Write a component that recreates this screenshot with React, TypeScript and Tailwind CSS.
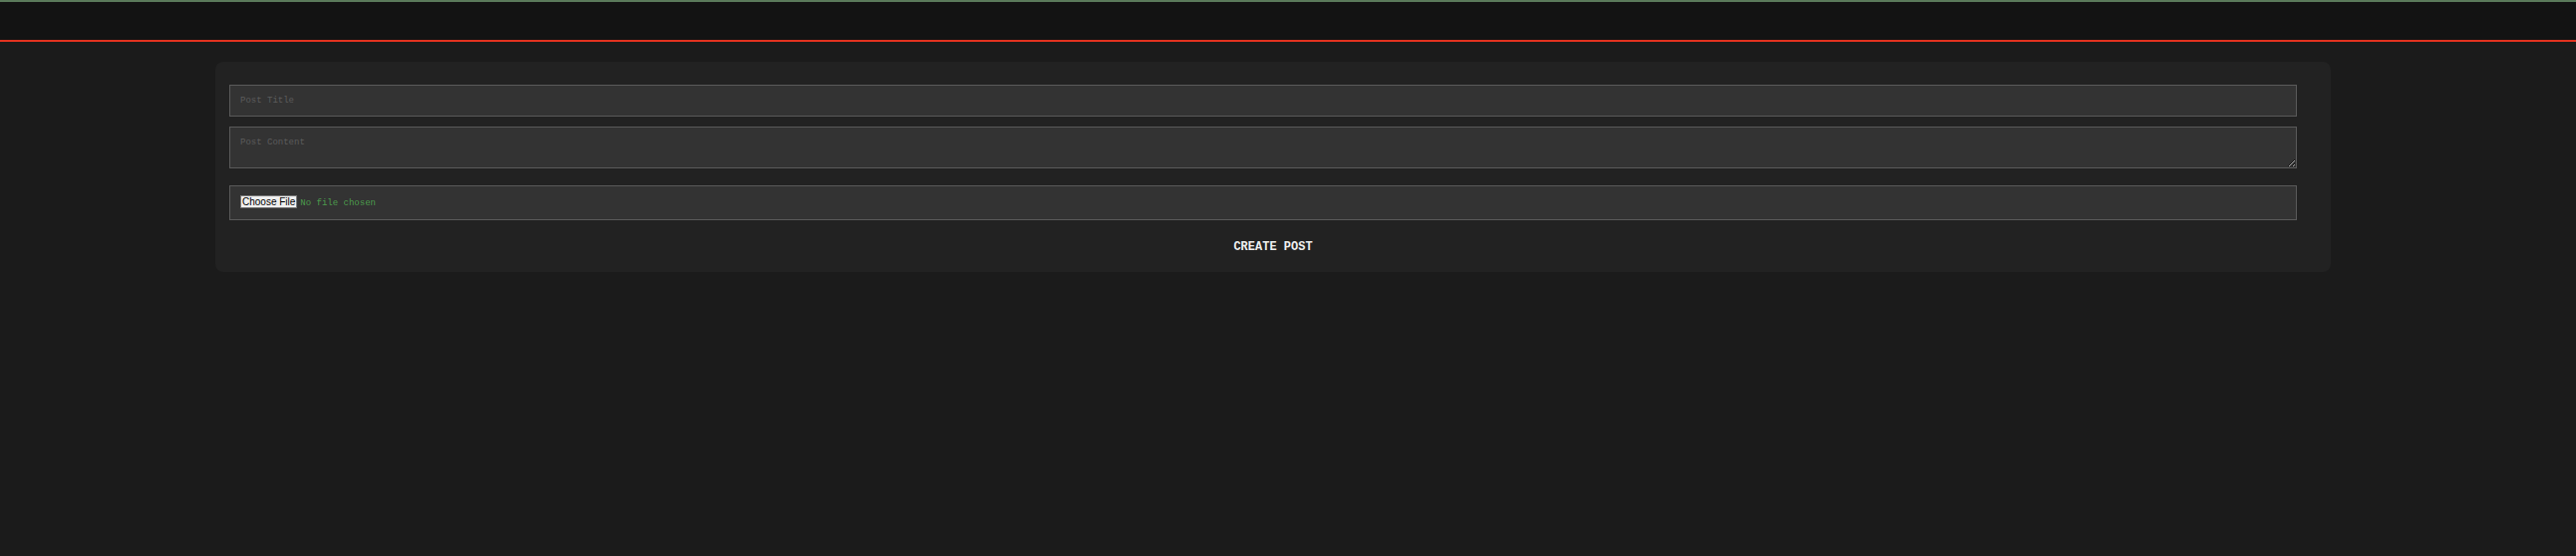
export default function App() {
  return (
    <div className="min-h-[558px] w-full bg-[#1b1b1b] font-['Courier_New','Liberation_Mono',monospace]">
      <header className="h-[42px] border-t-2 border-b-2 border-t-[#5b7a5b] border-b-[#e2321f] bg-[#131313]" />
      <form className="ml-[216px] mt-[20px] flex w-[2122px] flex-col rounded-[8px] bg-[#222222] px-[14px] pt-[23px] pb-[15px]">
        <input
          type="text"
          placeholder="Post Title"
          className="mr-[20px] h-[32px] border border-[#5a5a5a] bg-[#333333] px-[10px] text-[9px] text-[#dddddd] outline-none placeholder:text-[#5c5c5c]"
        />
        <textarea
          placeholder="Post Content"
          rows={2}
          className="mr-[20px] mt-[10px] h-[42px] border border-[#5a5a5a] bg-[#333333] px-[10px] py-[10px] text-[9px] leading-[10px] text-[#dddddd] outline-none placeholder:text-[#5c5c5c]"
        />
        <div className="mr-[20px] mt-[17px] flex h-[35px] items-center border border-[#5a5a5a] bg-[#333333] px-[10px]">
          <input
            type="file"
            className="text-[9px] text-[#4c9a4c] file:mr-[3px] file:border file:border-[#767676] file:bg-[#efefef] file:px-[1px] file:font-['Liberation_Sans',sans-serif] file:text-[10px] file:leading-[11px] file:text-black"
          />
        </div>
        <button
          type="button"
          className="mt-[17px] h-[20px] self-center bg-transparent text-[12px] font-bold text-[#eeeeee]"
        >
          CREATE POST
        </button>
      </form>
    </div>
  );
}
